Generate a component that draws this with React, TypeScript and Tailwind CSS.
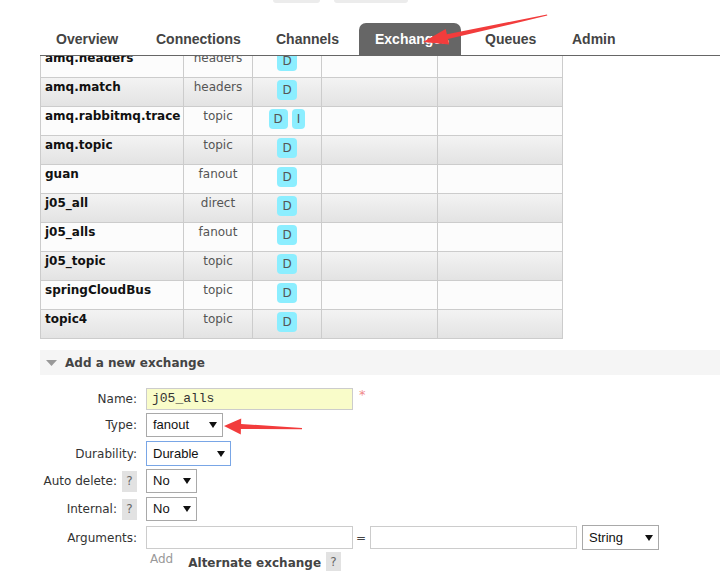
import React from 'react';

const rows: [string, string, string[]][] = [
  ['amq.headers', 'headers', ['D']],
  ['amq.match', 'headers', ['D']],
  ['amq.rabbitmq.trace', 'topic', ['D', 'I']],
  ['amq.topic', 'topic', ['D']],
  ['guan', 'fanout', ['D']],
  ['j05_all', 'direct', ['D']],
  ['j05_alls', 'fanout', ['D']],
  ['j05_topic', 'topic', ['D']],
  ['springCloudBus', 'topic', ['D']],
  ['topic4', 'topic', ['D']],
];

const tabs = [
  { label: 'Overview', w: 'w-[100px]' },
  { label: 'Connections', w: 'w-[120px]' },
  { label: 'Channels', w: 'w-[99px]' },
  { label: 'Exchanges', w: 'w-[102px]', active: true },
  { label: 'Queues', w: 'w-[87px] ml-[8px]' },
  { label: 'Admin', w: 'w-[75px]' },
];

const Caret = () => (
  <svg width="8" height="6" viewBox="0 0 8 6">
    <path d="M0 0 L8 0 L4 6 Z" fill="#111" />
  </svg>
);

const Select = ({ value, w, h, blue }: { value: string; w: string; h: string; blue?: boolean }) => (
  <div
    className={`${w} ${h} flex items-center justify-between pl-[6px] pr-[5px] bg-white border ${
      blue ? 'border-[#79a6e6]' : 'border-[#a9a9a9]'
    } text-[13px] text-[#111] font-['Liberation_Sans',Arial,sans-serif]`}
  >
    <span>{value}</span>
    <Caret />
  </div>
);

const Help = ({ h = 'h-[21px]' }: { h?: string }) => (
  <span className={`ml-[5px] w-[15px] ${h} bg-[#e2e2e2] text-[#666] text-[12px] flex items-center justify-center`}>?</span>
);

const Label = ({ text, help }: { text: string; help?: boolean }) => (
  <div className="w-[138px] flex items-center justify-end pr-[1px] text-[12px] text-[#333]">
    <span>{text}</span>
    {help && <Help />}
  </div>
);

export default function App() {
  return (
    <div className="relative w-[720px] h-[571px] overflow-hidden bg-white font-['DejaVu_Sans',Verdana,sans-serif]">
      {/* header */}
      <div className="h-[56px] flex flex-col">
        <div className="flex h-[3px]">
          <div className="ml-[273px] w-[47px] h-[3px] bg-[#ececec] rounded-b-[3px]" />
          <div className="ml-[14px] w-[74px] h-[3px] bg-[#ececec] rounded-b-[3px]" />
        </div>
        <div className="mt-[20px] ml-[40px] flex h-[33px] border-b border-[#666]">
          {tabs.map(t => (
            <div
              key={t.label}
              className={`${t.w} h-[32px] flex items-center pl-[16px] text-[14px] font-bold font-['Liberation_Sans',Arial,sans-serif] ${
                t.active ? 'bg-[#666] text-white rounded-t-[7px]' : 'text-[#444]'
              }`}
            >
              {t.label}
            </div>
          ))}
        </div>
      </div>

      {/* table */}
      <div className="h-[283px] overflow-hidden">
        <div className="mt-[-7px] ml-[40px] w-[523px] border-l border-[#ccc]">
          {rows.map(([name, type, feats], i) => (
            <div
              key={name}
              className={`flex h-[29px] border-b border-[#ccc] ${
                i % 2 === 1 ? 'bg-gradient-to-b from-[#f3f3f3] to-[#e3e3e3]' : 'bg-[#fcfcfc]'
              }`}
            >
              <div className="w-[143px] border-r border-[#ccc] pl-[4px] pt-[1px] leading-[16px] text-[12px] font-bold text-[#111]">
                {name}
              </div>
              <div className="w-[69px] border-r border-[#ccc] pt-[1px] leading-[16px] text-[12px] text-[#555] text-center">
                {type}
              </div>
              <div className="w-[69px] border-r border-[#ccc] pt-[2px] flex justify-center gap-[4px]">
                {feats.map(f => (
                  <span
                    key={f}
                    className="h-[20px] px-[5px] rounded-[4px] bg-[#8ceeff] text-[#555] text-[12px] flex items-center justify-center"
                  >
                    {f}
                  </span>
                ))}
              </div>
              <div className="w-[116px] border-r border-[#ccc]" />
              <div className="w-[125px] border-r border-[#ccc]" />
            </div>
          ))}
        </div>
      </div>

      {/* add a new exchange */}
      <div className="mt-[11px] ml-[40px] h-[25px] bg-[#f5f5f5] flex items-center">
        <svg className="ml-[6px]" width="11" height="6" viewBox="0 0 11 6">
          <path d="M0 0 L11 0 L5.5 6 Z" fill="#999" />
        </svg>
        <span className="ml-[8px] text-[12px] font-bold text-[#444]">Add a new exchange</span>
      </div>

      <div className="flex flex-col">
        <div className="mt-[13px] h-[22px] flex items-center">
          <Label text="Name:" />
          <div className="ml-[8px] w-[207px] h-[22px] bg-[#f9fcc9] border border-[#ccc] flex items-center pl-[5px] text-[13px] text-[#333] font-['Liberation_Mono','Courier_New',monospace]">
            j05_alls
          </div>
          <span className="ml-[6px] self-start text-[13px] leading-[13px] text-[#f08a8a]">*</span>
        </div>

        <div className="mt-[3px] h-[24px] flex items-center">
          <Label text="Type:" />
          <div className="ml-[8px]">
            <Select value="fanout" w="w-[77px]" h="h-[24px]" />
          </div>
        </div>

        <div className="mt-[4px] h-[25px] flex items-center">
          <Label text="Durability:" />
          <div className="ml-[8px]">
            <Select value="Durable" w="w-[85px]" h="h-[25px]" blue />
          </div>
        </div>

        <div className="mt-[3px] h-[24px] flex items-center">
          <Label text="Auto delete:" help />
          <div className="ml-[8px]">
            <Select value="No" w="w-[51px]" h="h-[24px]" />
          </div>
        </div>

        <div className="mt-[4px] h-[24px] flex items-center">
          <Label text="Internal:" help />
          <div className="ml-[8px]">
            <Select value="No" w="w-[51px]" h="h-[24px]" />
          </div>
        </div>

        <div className="mt-[4px] h-[25px] flex items-center">
          <Label text="Arguments:" />
          <div className="ml-[8px] w-[207px] h-[23px] bg-white border border-[#ccc]" />
          <span className="ml-[3px] mr-[4px] text-[12px] text-[#444]">=</span>
          <div className="w-[207px] h-[23px] bg-white border border-[#ccc]" />
          <div className="ml-[5px]">
            <Select value="String" w="w-[77px]" h="h-[25px]" />
          </div>
        </div>

        <div className="mt-[2px] h-[19px] flex items-center">
          <span className="ml-[150px] self-start text-[12px] text-[#999] leading-[14px]">Add</span>
          <span className="ml-[15px] text-[12px] font-bold text-[#444] pt-[2px]">Alternate exchange</span>
          <Help h="h-[19px]" />
        </div>
      </div>

      {/* annotation arrows */}
      <svg className="absolute left-0 top-0 pointer-events-none" width="720" height="571" viewBox="0 0 720 571">
        <polygon
          points="423,42 445.7,28.9 446.9,34.3 547,14.4 547.3,15.6 447.9,39.1 449.1,44.5"
          fill="#f23c3c"
        />
        <polygon points="224,426 241.2,418.5 241.1,424 302,428 302,429.2 240.9,429 240.8,434.5" fill="#f23c3c" />
      </svg>
    </div>
  );
}
